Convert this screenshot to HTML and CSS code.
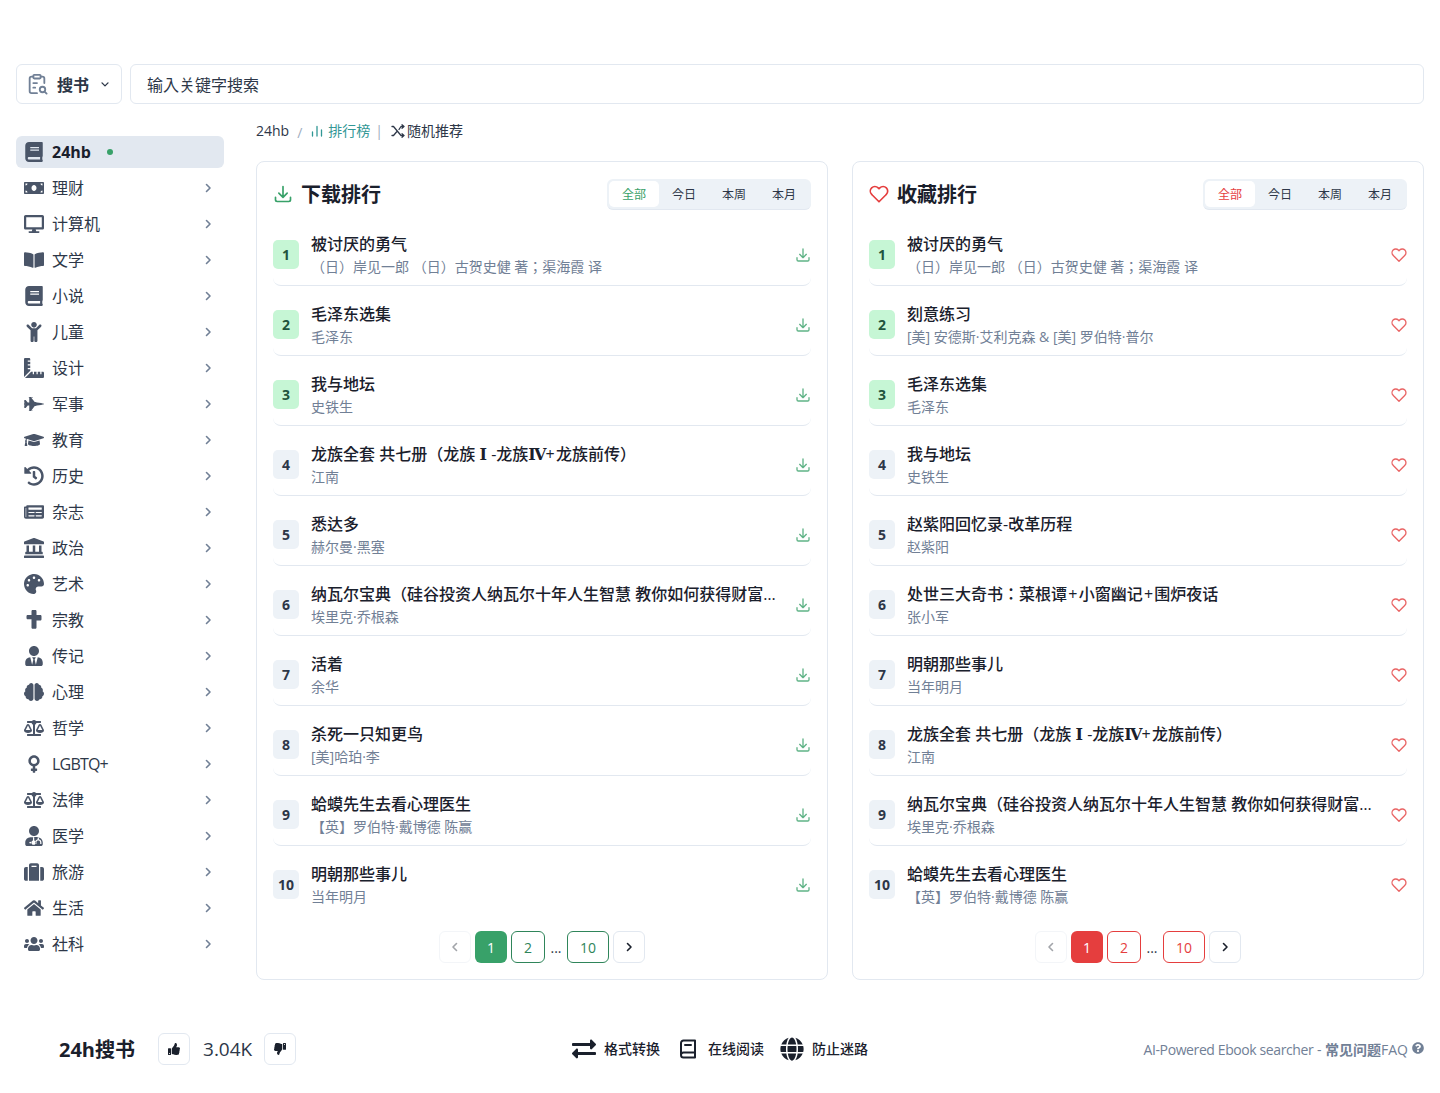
FILE: index.html
```html
<!DOCTYPE html>
<html lang="en">
<head>
    <meta charset="UTF-8">
    <meta name="viewport" content="width=device-width, initial-scale=1.0">
    <title>24h搜书</title>
    <link rel="stylesheet" href="styles.css">
</head>
<body>
    <svg class="icon-defs" xmlns="http://www.w3.org/2000/svg">
        <symbol id="i-book" viewBox="0 0 448 512"><path d="M448 360V24c0-13.3-10.7-24-24-24H96C43 0 0 43 0 96v320c0 53 43 96 96 96h328c13.3 0 24-10.7 24-24v-16c0-7.5-3.5-14.3-8.9-18.7-4.2-15.4-4.2-59.3 0-74.7 5.4-4.3 8.9-11.1 8.9-18.6zM128 134c0-3.3 2.7-6 6-6h212c3.3 0 6 2.7 6 6v20c0 3.3-2.7 6-6 6H134c-3.3 0-6-2.7-6-6v-20zm0 64c0-3.3 2.7-6 6-6h212c3.3 0 6 2.7 6 6v20c0 3.3-2.7 6-6 6H134c-3.3 0-6-2.7-6-6v-20zm253.4 250H96c-17.7 0-32-14.3-32-32 0-17.6 14.4-32 32-32h285.4c-1.9 17.1-1.9 46.9 0 64z"/></symbol>
        <symbol id="i-money" viewBox="0 0 640 512"><path d="M608 64H32C14.33 64 0 78.33 0 96v320c0 17.67 14.33 32 32 32h576c17.67 0 32-14.33 32-32V96c0-17.67-14.33-32-32-32zM48 400v-64c35.35 0 64 28.65 64 64H48zm0-224v-64h64c0 35.35-28.65 64-64 64zm272 176c-44.19 0-80-42.99-80-96 0-53.02 35.82-96 80-96s80 42.98 80 96c0 53.03-35.83 96-80 96zm272 48h-64c0-35.35 28.65-64 64-64v64zm0-224c-35.35 0-64-28.65-64-64h64v64z"/></symbol>
        <symbol id="i-desktop" viewBox="0 0 576 512"><path d="M528 0H48C21.5 0 0 21.5 0 48v320c0 26.5 21.5 48 48 48h192l-16 48h-72c-13.3 0-24 10.7-24 24s10.7 24 24 24h272c13.3 0 24-10.7 24-24s-10.7-24-24-24h-72l-16-48h192c26.5 0 48-21.5 48-48V48c0-26.5-21.5-48-48-48zm-16 352H64V64h448v288z"/></symbol>
        <symbol id="i-book-open" viewBox="0 0 576 512"><path d="M542.22 32.05c-54.8 3.11-163.72 14.43-230.96 55.59-4.64 2.84-7.27 7.89-7.27 13.17v363.87c0 11.55 12.63 18.85 23.28 13.49 69.18-34.82 169.23-44.32 218.7-46.92 16.89-.89 30.02-14.43 30.02-30.66V62.75c.01-17.71-15.35-31.74-33.77-30.7zM264.73 87.64C197.5 46.48 88.58 35.17 33.78 32.05 15.36 31.01 0 45.04 0 62.75V400.6c0 16.24 13.13 29.78 30.02 30.66 49.49 2.6 149.59 12.11 218.77 46.95 10.62 5.35 23.21-1.94 23.21-13.46V100.63c0-5.29-2.62-10.14-7.27-12.99z"/></symbol>
        <symbol id="i-child" viewBox="0 0 384 512"><path d="M120 72c0-39.765 32.235-72 72-72s72 32.235 72 72c0 39.764-32.235 72-72 72s-72-32.236-72-72zm254.627 1.373c-12.496-12.497-32.758-12.497-45.254 0L242.745 160H141.254L54.627 73.373c-12.496-12.497-32.758-12.497-45.254 0-12.497 12.497-12.497 32.758 0 45.255L104 213.254V480c0 17.673 14.327 32 32 32h16c17.673 0 32-14.327 32-32V368h16v112c0 17.673 14.327 32 32 32h16c17.673 0 32-14.327 32-32V213.254l94.627-94.627c12.497-12.497 12.497-32.757 0-45.254z"/></symbol>
        <symbol id="i-ruler" viewBox="0 0 512 512"><path d="M160 288h-56c-4.42 0-8-3.58-8-8v-16c0-4.42 3.58-8 8-8h56v-64h-56c-4.42 0-8-3.58-8-8v-16c0-4.42 3.58-8 8-8h56V96h-56c-4.42 0-8-3.58-8-8V72c0-4.42 3.58-8 8-8h56V32c0-17.67-14.33-32-32-32H32C14.33 0 0 14.33 0 32v448c0 2.77.91 5.24 1.57 7.8L160 329.38V288zm320 64h-32v56c0 4.42-3.58 8-8 8h-16c-4.42 0-8-3.58-8-8v-56h-64v56c0 4.42-3.58 8-8 8h-16c-4.42 0-8-3.58-8-8v-56h-64v56c0 4.42-3.58 8-8 8h-16c-4.42 0-8-3.58-8-8v-56h-41.37L24.2 510.43c2.56.66 5.04 1.57 7.8 1.57h448c17.67 0 32-14.33 32-32v-96c0-17.67-14.33-32-32-32z"/></symbol>
        <symbol id="i-jet" viewBox="0 0 640 512"><path d="M544 224l-128-16-48-16h-24L227.158 44h39.509C278.333 44 288 41.375 288 38s-9.667-6-21.333-6H152v12h16v164h-48l-66.667-80H18.667L8 138.667V208h8v16h48v2.666l-64 8v42.667l64 8V288H16v16H8v69.333L18.667 384h34.667L120 304h48v164h-16v12h114.667c11.667 0 21.333-2.625 21.333-6s-9.667-6-21.333-6h-39.509L344 320h24l48-16 128-16c96-21.333 96-26.583 96-32 0-5.417 0-10.667-96-32z"/></symbol>
        <symbol id="i-cap" viewBox="0 0 640 512"><path d="M622.34 153.2L343.4 67.5c-15.2-4.67-31.6-4.67-46.79 0L17.66 153.2c-23.54 7.23-23.54 38.36 0 45.59l48.63 14.94c-10.67 13.19-17.23 29.28-17.88 46.9C38.78 266.15 32 276.11 32 288c0 10.78 5.68 19.85 13.86 25.65L20.33 428.53C18.11 438.52 25.71 448 35.94 448h56.11c10.24 0 17.84-9.48 15.62-19.47L82.14 313.65C90.32 307.85 96 298.78 96 288c0-11.57-6.47-21.25-15.66-26.87.76-15.02 8.44-28.3 20.69-36.72L296.6 284.5c9.06 2.78 26.44 6.25 46.79 0l278.95-85.7c23.55-7.24 23.55-38.36 0-45.6zM352.79 315.09c-28.53 8.76-52.84 3.92-65.59 0l-145.02-44.55L128 384c0 35.35 85.96 64 192 64s192-28.65 192-64l-14.18-113.47-145.03 44.56z"/></symbol>
        <symbol id="i-history" viewBox="0 0 512 512"><path d="M504 255.531c.253 136.64-111.18 248.372-247.82 248.468-59.015.042-113.223-20.53-155.822-54.911-11.077-8.94-11.905-25.541-1.839-35.607l11.267-11.267c8.609-8.609 22.353-9.551 31.891-1.984C173.062 425.135 212.781 440 256 440c101.705 0 184-82.311 184-184 0-101.705-82.311-184-184-184-48.814 0-93.149 18.969-126.068 49.932l50.754 50.754c10.08 10.08 2.941 27.314-11.313 27.314H24c-8.837 0-16-7.163-16-16V38.627c0-14.254 17.234-21.393 27.314-11.314l49.372 49.372C129.209 34.136 189.552 8 256 8c136.81 0 247.747 110.78 248 247.531zm-180.912 78.784l9.823-12.63c8.138-10.463 6.253-25.542-4.21-33.679L288 256.349V152c0-13.255-10.745-24-24-24h-16c-13.255 0-24 10.745-24 24v135.651l65.409 50.874c10.463 8.137 25.541 6.253 33.679-4.21z"/></symbol>
        <symbol id="i-news" viewBox="0 0 576 512"><path d="M552 64H88c-13.255 0-24 10.745-24 24v8H24c-13.255 0-24 10.745-24 24v272c0 30.928 25.072 56 56 56h472c26.51 0 48-21.49 48-48V88c0-13.255-10.745-24-24-24zM56 400a8 8 0 0 1-8-8V144h16v248a8 8 0 0 1-8 8zm236-16H140c-6.627 0-12-5.373-12-12v-8c0-6.627 5.373-12 12-12h152c6.627 0 12 5.373 12 12v8c0 6.627-5.373 12-12 12zm208 0H348c-6.627 0-12-5.373-12-12v-8c0-6.627 5.373-12 12-12h152c6.627 0 12 5.373 12 12v8c0 6.627-5.373 12-12 12zm-208-96H140c-6.627 0-12-5.373-12-12v-8c0-6.627 5.373-12 12-12h152c6.627 0 12 5.373 12 12v8c0 6.627-5.373 12-12 12zm208 0H348c-6.627 0-12-5.373-12-12v-8c0-6.627 5.373-12 12-12h152c6.627 0 12 5.373 12 12v8c0 6.627-5.373 12-12 12zm0-96H140c-6.627 0-12-5.373-12-12v-40c0-6.627 5.373-12 12-12h360c6.627 0 12 5.373 12 12v40c0 6.627-5.373 12-12 12z"/></symbol>
        <symbol id="i-landmark" viewBox="0 0 512 512"><path d="M501.62 92.11L267.24 2.04a31.958 31.958 0 0 0-22.47 0L10.38 92.11A16.001 16.001 0 0 0 0 107.09V144c0 8.84 7.16 16 16 16h480c8.84 0 16-7.16 16-16v-36.91c0-6.67-4.14-12.64-10.38-14.98zM64 192v160H48c-8.84 0-16 7.16-16 16v48h448v-48c0-8.84-7.16-16-16-16h-16V192h-64v160h-96V192h-64v160h-96V192H64zm432 256H16c-8.84 0-16 7.16-16 16v32c0 8.84 7.16 16 16 16h480c8.84 0 16-7.16 16-16v-32c0-8.84-7.16-16-16-16z"/></symbol>
        <symbol id="i-palette" viewBox="0 0 512 512"><path d="M204.3 5C104.9 24.4 24.8 104.3 5.2 203.4c-37 187 131.7 326.4 258.8 306.7 41.2-6.4 61.4-54.6 42.5-91.7-23.1-45.4 9.9-98.4 60.9-98.4h79.7c35.8 0 64.8-29.6 64.9-65.3C511.5 97.1 368.1-26.9 204.3 5zM96 320c-17.7 0-32-14.3-32-32s14.3-32 32-32 32 14.3 32 32-14.3 32-32 32zm32-128c-17.7 0-32-14.3-32-32s14.3-32 32-32 32 14.3 32 32-14.3 32-32 32zm128-64c-17.7 0-32-14.3-32-32s14.3-32 32-32 32 14.3 32 32-14.3 32-32 32zm128 64c-17.7 0-32-14.3-32-32s14.3-32 32-32 32 14.3 32 32-14.3 32-32 32z"/></symbol>
        <symbol id="i-cross" viewBox="0 0 384 512"><path d="M352 128h-96V32c0-17.67-14.33-32-32-32h-64c-17.67 0-32 14.33-32 32v96H32c-17.67 0-32 14.33-32 32v44c0 17.67 14.33 32 32 32h96v212c0 17.67 14.33 32 32 32h64c17.67 0 32-14.33 32-32V268h96c17.67 0 32-14.33 32-32v-76c0-17.67-14.33-32-32-32z"/></symbol>
        <symbol id="i-user-tie" viewBox="0 0 448 512"><path d="M224 256c70.7 0 128-57.3 128-128S294.7 0 224 0 96 57.3 96 128s57.3 128 128 128zm95.8 32.6L272 480l-32-136 32-56h-96l32 56-32 136-47.8-191.4C56.9 292 0 350.3 0 422.4V464c0 26.5 21.5 48 48 48h352c26.5 0 48-21.5 48-48v-41.6c0-72.1-56.9-130.4-128.2-133.8z"/></symbol>
        <symbol id="i-brain" viewBox="0 0 576 512"><path d="M208 0c-29.9 0-54.7 20.5-61.8 48.2-.8 0-1.4-.2-2.2-.2-35.3 0-64 28.7-64 64 0 4.8.6 9.5 1.7 14C52.5 138 32 166.6 32 200c0 12.6 3.2 24.3 8.3 34.9C16.3 248.7 0 274.3 0 304c0 33.3 20.4 61.9 49.4 73.9-.9 4.6-1.4 9.3-1.4 14.1 0 39.8 32.2 72 72 72 4.1 0 8.1-.5 12-1.2 9.6 28.5 36.2 49.2 68 49.2 39.8 0 72-32.2 72-72V64c0-35.3-28.7-64-64-64zm368 304c0-29.7-16.3-55.3-40.3-69.1 5.2-10.6 8.3-22.3 8.3-34.9 0-33.4-20.5-62-49.7-74 1-4.5 1.7-9.2 1.7-14 0-35.3-28.7-64-64-64-.8 0-1.5.2-2.2.2C422.7 20.5 397.9 0 368 0c-35.3 0-64 28.6-64 64v376c0 39.8 32.2 72 72 72 31.8 0 58.4-20.7 68-49.2 3.9.7 7.9 1.2 12 1.2 39.8 0 72-32.2 72-72 0-4.8-.5-9.5-1.4-14.1 29-12 49.4-40.6 49.4-73.9z"/></symbol>
        <symbol id="i-scale" viewBox="0 0 640 512"><path d="M256 336h-.02c0-16.18 1.34-8.73-85.05-181.51-17.65-35.29-68.19-35.36-85.87 0C-2.06 328.75.02 320.33.02 336H0c0 44.18 57.31 80 128 80s128-35.82 128-80zM128 176l72 144H56l72-144zm511.98 160c0-16.18 1.34-8.73-85.05-181.51-17.65-35.29-68.19-35.36-85.87 0-87.12 174.26-85.04 165.84-85.04 181.51H384c0 44.18 57.31 80 128 80s128-35.82 128-80h-.02zM440 320l72-144 72 144H440zm88 128H352V153.25c23.51-10.29 41.16-31.48 46.39-57.25H528c8.84 0 16-7.16 16-16V48c0-8.84-7.16-16-16-16H383.64C369.04 12.68 346.09 0 320 0s-49.04 12.68-63.64 32H112c-8.84 0-16 7.16-16 16v32c0 8.84 7.16 16 16 16h129.61c5.23 25.76 22.87 46.96 46.39 57.25V448H112c-8.84 0-16 7.16-16 16v32c0 8.84 7.16 16 16 16h416c8.84 0 16-7.16 16-16v-32c0-8.84-7.16-16-16-16z"/></symbol>
        <symbol id="i-venus" viewBox="0 0 288 512"><path d="M288 176c0-79.5-64.5-144-144-144S0 96.5 0 176c0 68.5 47.9 125.9 112 140.4V368H76c-6.6 0-12 5.4-12 12v40c0 6.6 5.4 12 12 12h36v36c0 6.6 5.4 12 12 12h40c6.6 0 12-5.4 12-12v-36h36c6.6 0 12-5.4 12-12v-40c0-6.6-5.4-12-12-12h-36v-51.6c64.1-14.5 112-71.9 112-140.4zm-224 0c0-44.1 35.9-80 80-80s80 35.9 80 80-35.9 80-80 80-80-35.9-80-80z"/></symbol>
        <symbol id="i-user-md" viewBox="0 0 448 512"><path d="M224 256c70.7 0 128-57.3 128-128S294.7 0 224 0 96 57.3 96 128s57.3 128 128 128z"/><path fill-rule="evenodd" d="M130 288C58 292 0 350 0 422v42c0 26.500 21.500 48 48 48h352c26.500 0 48-21.500 48-48v-42c0-72-58-130-130-134v52c-36 8-64 40-64 78v40h32v-40c0-62 96-62 96 0v40h32v-40c0-38-28-70-64-78v-50c-14-4-30-6-46-6h-60c-16 0-32 2-46 6v84c-24 7-40 28-40 52 0 31 25 56 56 56s56-25 56-56c0-24-16-45-40-52v-86zm-2 112a24 24 0 1 0 0 48 24 24 0 0 0 0-48z"/></symbol>
        <symbol id="i-suitcase" viewBox="0 0 512 512"><path d="M128 480h256V80c0-26.500-21.500-48-48-48H176c-26.500 0-48 21.500-48 48v400zm64-384h128v32H192V96zm320 80v256c0 26.500-21.500 48-48 48h-48V128h48c26.500 0 48 21.500 48 48zM96 480H48c-26.500 0-48-21.500-48-48V176c0-26.500 21.500-48 48-48h48v352z"/></symbol>
        <symbol id="i-home" viewBox="0 0 576 512"><path d="M280.37 148.26L96 300.11V464a16 16 0 0 0 16 16l112.06-.29a16 16 0 0 0 15.92-16V368a16 16 0 0 1 16-16h64a16 16 0 0 1 16 16v95.640a16 16 0 0 0 16 16.050L464 480a16 16 0 0 0 16-16V300L295.670 148.260a12.190 12.190 0 0 0-15.300 0zM571.600 251.470L488 182.560V44.050a12 12 0 0 0-12-12h-56a12 12 0 0 0-12 12v72.610L318.470 43a48 48 0 0 0-61 0L4.340 251.470a12 12 0 0 0-1.600 16.900l25.500 31A12 12 0 0 0 45.150 301l235.220-193.740a12.190 12.190 0 0 1 15.300 0L530.900 301a12 12 0 0 0 16.900-1.600l25.500-31a12 12 0 0 0-1.700-16.930z"/></symbol>
        <symbol id="i-users" viewBox="0 0 640 512"><path d="M96 224c35.300 0 64-28.700 64-64s-28.700-64-64-64-64 28.700-64 64 28.700 64 64 64zm448 0c35.300 0 64-28.700 64-64s-28.700-64-64-64-64 28.700-64 64 28.700 64 64 64zm32 32h-64c-17.600 0-33.500 7.100-45.100 18.600 40.300 22.100 68.900 62 75.100 109.400h66c17.700 0 32-14.300 32-32v-32c0-35.300-28.700-64-64-64zm-256 0c61.900 0 112-50.100 112-112S381.900 32 320 32 208 82.100 208 144s50.100 112 112 112zm76.800 32h-8.300c-20.800 10-43.900 16-68.500 16s-47.600-6-68.500-16h-8.300C179.600 288 128 339.600 128 403.200V432c0 26.500 21.500 48 48 48h288c26.500 0 48-21.500 48-48v-28.800c0-63.600-51.600-115.200-115.200-115.200zm-223.700-13.400C161.500 263.100 145.600 256 128 256H64c-35.300 0-64 28.700-64 64v32c0 17.700 14.300 32 32 32h65.900c6.300-47.400 34.900-87.300 75.200-109.400z"/></symbol>
        <symbol id="i-thumb" viewBox="0 0 512 512"><path d="M104 224H24c-13.255 0-24 10.745-24 24v240c0 13.255 10.745 24 24 24h80c13.255 0 24-10.745 24-24V248c0-13.255-10.745-24-24-24zM64 472c-13.255 0-24-10.745-24-24s10.745-24 24-24 24 10.745 24 24-10.745 24-24 24zM384 81.452c0 42.416-25.970 66.208-33.277 94.548h101.723c33.397 0 59.397 27.746 59.553 58.098.084 17.938-7.546 37.249-19.439 49.197l-.11.11c9.836 23.337 8.237 56.037-9.308 79.469 8.681 25.895-.069 57.704-16.382 74.757 4.298 17.598 2.244 32.575-6.148 44.632C440.202 511.587 389.616 512 346.839 512l-2.845-.001c-48.287-.017-87.806-17.598-119.560-31.725-15.957-7.099-36.821-15.887-52.651-16.178-6.540-.12-11.783-5.457-11.783-11.998v-213.770c0-3.200 1.282-6.271 3.558-8.521 39.614-39.144 56.648-80.587 89.117-113.111 14.804-14.832 20.188-37.236 25.393-58.902C282.515 39.293 291.817 0 312 0c24 0 72 8 72 81.452z"/></symbol>
        <symbol id="i-exchange" viewBox="0 0 512 512"><path d="M0 168v-16c0-13.255 10.745-24 24-24h360V80c0-21.367 25.899-32.042 40.971-16.971l80 80c9.372 9.373 9.372 24.569 0 33.941l-80 80C409.956 271.982 384 261.456 384 240v-48H24c-13.255 0-24-10.745-24-24zm488 152H128v-48c0-21.314-25.862-32.080-40.971-16.971l-80 80c-9.372 9.373-9.372 24.569 0 33.941l80 80C102.057 463.997 128 453.437 128 432v-48h360c13.255 0 24-10.745 24-24v-16c0-13.255-10.745-24-24-24z"/></symbol>
        <symbol id="i-globe" viewBox="0 0 496 512"><path d="M336.500 160C322 70.700 287.800 8 248 8s-74 62.700-88.500 152h177zM152 256c0 22.200 1.200 43.500 3.300 64h185.300c2.100-20.500 3.300-41.800 3.300-64s-1.200-43.500-3.300-64H155.300c-2.100 20.500-3.300 41.800-3.300 64zm324.700-96c-28.600-67.900-86.500-120.400-158-141.600 24.400 33.800 41.200 84.700 50 141.600h108zM177.200 18.400C105.800 39.600 47.800 92.100 19.300 160h108c8.700-56.900 25.500-107.800 49.900-141.600zM487.400 192H372.700c2.100 21 3.300 42.500 3.300 64s-1.200 43-3.300 64h114.600c5.500-20.500 8.600-41.800 8.600-64s-3.100-43.500-8.500-64zM120 256c0-21.500 1.200-43 3.300-64H8.600C3.200 212.500 0 233.800 0 256s3.200 43.500 8.600 64h114.600c-2-21-3.200-42.500-3.200-64zm39.500 96c14.500 89.300 48.700 152 88.500 152s74-62.700 88.500-152h-177zm159.300 141.600c71.400-21.200 129.400-73.700 158-141.600h-108c-8.800 56.900-25.600 107.800-50 141.600zM19.300 352c28.600 67.900 86.500 120.400 158 141.600-24.400-33.800-41.200-84.700-50-141.600h-108z"/></symbol>
        <symbol id="i-question" viewBox="0 0 512 512"><path d="M504 256c0 136.997-111.043 248-248 248S8 392.997 8 256C8 119.083 119.043 8 256 8s248 111.083 248 248zM262.655 90c-54.497 0-89.255 22.957-116.549 63.758-3.536 5.286-2.353 12.415 2.715 16.258l34.699 26.310c5.205 3.947 12.621 3.008 16.665-2.122 17.864-22.658 30.113-35.797 57.303-35.797 20.429 0 45.698 13.148 45.698 32.958 0 14.976-12.363 22.667-32.534 33.976C247.128 238.528 216 254.941 216 296v4c0 6.627 5.373 12 12 12h56c6.627 0 12-5.373 12-12v-1.333c0-28.462 83.186-29.647 83.186-106.667 0-58.002-60.165-102-116.531-102zM256 338c-25.365 0-46 20.635-46 46 0 25.364 20.635 46 46 46s46-20.636 46-46c0-25.365-20.635-46-46-46z"/></symbol>
        <symbol id="i-download" viewBox="0 0 24 24"><path fill="none" stroke="currentColor" stroke-width="2" stroke-linecap="round" stroke-linejoin="round" d="M3 16v3a2 2 0 0 0 2 2h14a2 2 0 0 0 2-2v-3M12 3v13M7 11l5 5 5-5"/></symbol>
        <symbol id="i-heart" viewBox="0 0 24 24"><path fill="none" stroke="currentColor" stroke-width="2" stroke-linecap="round" stroke-linejoin="round" d="M20.800 4.600a5.500 5.500 0 0 0-7.800 0L12 5.700l-1-1.100a5.500 5.500 0 0 0-7.800 7.800l1 1.100L12 21.300l7.800-7.800 1-1.100a5.500 5.500 0 0 0 0-7.800z"/></symbol>
        <symbol id="i-chevron" viewBox="0 0 16 16"><path fill="none" stroke="currentColor" stroke-width="1.600" stroke-linecap="round" stroke-linejoin="round" d="M6.500 4.500 10 8l-3.500 3.500"/></symbol>
    </svg>

    <div class="search-row">
        <button class="search-type">
            <svg class="search-type-icon" viewBox="0 0 24 24" fill="none" stroke="currentColor" stroke-width="2" stroke-linecap="round" stroke-linejoin="round"><path d="M16 4h2a2 2 0 0 1 2 2v5M8 4H6a2 2 0 0 0-2 2v14a2 2 0 0 0 2 2h6"/><rect x="8" y="2" width="8" height="4" rx="1"/><path d="M8 11h4M8 16h2"/><circle cx="18" cy="18" r="3"/><path d="m20.500 20.500 2 2"/></svg>
            <span>搜书</span>
            <svg class="search-type-caret" viewBox="0 0 16 16" fill="none" stroke="currentColor" stroke-width="1.800" stroke-linecap="round" stroke-linejoin="round"><path d="M4 6.500 8 10.500 12 6.500"/></svg>
        </button>
        <div class="search-input">输入关键字搜索</div>
    </div>

    <div class="layout">
        <nav class="sidebar">
            <a class="nav-item active"><svg class="nav-icon"><use href="#i-book"/></svg><span class="nav-label">24hb</span><i class="nav-dot"></i></a>
            <a class="nav-item"><svg class="nav-icon"><use href="#i-money"/></svg><span class="nav-label">理财</span><svg class="nav-chevron"><use href="#i-chevron"/></svg></a>
            <a class="nav-item"><svg class="nav-icon"><use href="#i-desktop"/></svg><span class="nav-label">计算机</span><svg class="nav-chevron"><use href="#i-chevron"/></svg></a>
            <a class="nav-item"><svg class="nav-icon"><use href="#i-book-open"/></svg><span class="nav-label">文学</span><svg class="nav-chevron"><use href="#i-chevron"/></svg></a>
            <a class="nav-item"><svg class="nav-icon"><use href="#i-book"/></svg><span class="nav-label">小说</span><svg class="nav-chevron"><use href="#i-chevron"/></svg></a>
            <a class="nav-item"><svg class="nav-icon"><use href="#i-child"/></svg><span class="nav-label">儿童</span><svg class="nav-chevron"><use href="#i-chevron"/></svg></a>
            <a class="nav-item"><svg class="nav-icon"><use href="#i-ruler"/></svg><span class="nav-label">设计</span><svg class="nav-chevron"><use href="#i-chevron"/></svg></a>
            <a class="nav-item"><svg class="nav-icon"><use href="#i-jet"/></svg><span class="nav-label">军事</span><svg class="nav-chevron"><use href="#i-chevron"/></svg></a>
            <a class="nav-item"><svg class="nav-icon"><use href="#i-cap"/></svg><span class="nav-label">教育</span><svg class="nav-chevron"><use href="#i-chevron"/></svg></a>
            <a class="nav-item"><svg class="nav-icon"><use href="#i-history"/></svg><span class="nav-label">历史</span><svg class="nav-chevron"><use href="#i-chevron"/></svg></a>
            <a class="nav-item"><svg class="nav-icon"><use href="#i-news"/></svg><span class="nav-label">杂志</span><svg class="nav-chevron"><use href="#i-chevron"/></svg></a>
            <a class="nav-item"><svg class="nav-icon"><use href="#i-landmark"/></svg><span class="nav-label">政治</span><svg class="nav-chevron"><use href="#i-chevron"/></svg></a>
            <a class="nav-item"><svg class="nav-icon"><use href="#i-palette"/></svg><span class="nav-label">艺术</span><svg class="nav-chevron"><use href="#i-chevron"/></svg></a>
            <a class="nav-item"><svg class="nav-icon"><use href="#i-cross"/></svg><span class="nav-label">宗教</span><svg class="nav-chevron"><use href="#i-chevron"/></svg></a>
            <a class="nav-item"><svg class="nav-icon"><use href="#i-user-tie"/></svg><span class="nav-label">传记</span><svg class="nav-chevron"><use href="#i-chevron"/></svg></a>
            <a class="nav-item"><svg class="nav-icon"><use href="#i-brain"/></svg><span class="nav-label">心理</span><svg class="nav-chevron"><use href="#i-chevron"/></svg></a>
            <a class="nav-item"><svg class="nav-icon"><use href="#i-scale"/></svg><span class="nav-label">哲学</span><svg class="nav-chevron"><use href="#i-chevron"/></svg></a>
            <a class="nav-item"><svg class="nav-icon"><use href="#i-venus"/></svg><span class="nav-label nav-latin">LGBTQ+</span><svg class="nav-chevron"><use href="#i-chevron"/></svg></a>
            <a class="nav-item"><svg class="nav-icon"><use href="#i-scale"/></svg><span class="nav-label">法律</span><svg class="nav-chevron"><use href="#i-chevron"/></svg></a>
            <a class="nav-item"><svg class="nav-icon"><use href="#i-user-md"/></svg><span class="nav-label">医学</span><svg class="nav-chevron"><use href="#i-chevron"/></svg></a>
            <a class="nav-item"><svg class="nav-icon"><use href="#i-suitcase"/></svg><span class="nav-label">旅游</span><svg class="nav-chevron"><use href="#i-chevron"/></svg></a>
            <a class="nav-item"><svg class="nav-icon"><use href="#i-home"/></svg><span class="nav-label">生活</span><svg class="nav-chevron"><use href="#i-chevron"/></svg></a>
            <a class="nav-item"><svg class="nav-icon"><use href="#i-users"/></svg><span class="nav-label">社科</span><svg class="nav-chevron"><use href="#i-chevron"/></svg></a>
        </nav>

        <main class="content">
            <div class="crumbs">
                <span>24hb</span>
                <span class="crumb-slash">/</span>
                <span class="crumb-rank">
                    <svg class="crumb-icon" viewBox="0 0 14 14" fill="none" stroke="currentColor" stroke-width="1.300" stroke-linecap="round"><path d="M2.500 12V8M7 12V2.500M11.500 12V6"/></svg>
                    排行榜
                </span>
                <span class="crumb-bar">|</span>
                <span class="crumb-random">
                    <svg class="crumb-icon" viewBox="0 0 14 14" fill="none" stroke="currentColor" stroke-width="1.300" stroke-linecap="round" stroke-linejoin="round"><path d="M1 2.500h1.500l7.500 9H13M1 11.500h1.500L5.500 8M8 5.500l2-3H13M11 .8l2 1.700-2 1.700M11 9.800l2 1.700-2 1.700"/></svg>
                    随机推荐
                </span>
            </div>

            <div class="boards">
                <section class="board board-green">
                    <header class="board-head">
                        <svg class="board-icon"><use href="#i-download"/></svg>
                        <h2>下载排行</h2>
                        <div class="tabs"><span class="tab on">全部</span><span class="tab">今日</span><span class="tab">本周</span><span class="tab">本月</span></div>
                    </header>
                    <ol class="rank-list">
                        <li class="rank-row"><span class="rank top">1</span><div class="rank-text"><div class="rank-title">被讨厌的勇气</div><div class="rank-sub">（日）岸见一郎 （日）古贺史健 著；渠海霞 译</div></div><svg class="rank-action"><use href="#i-download"/></svg></li>
                        <li class="rank-row"><span class="rank top">2</span><div class="rank-text"><div class="rank-title">毛泽东选集</div><div class="rank-sub">毛泽东</div></div><svg class="rank-action"><use href="#i-download"/></svg></li>
                        <li class="rank-row"><span class="rank top">3</span><div class="rank-text"><div class="rank-title">我与地坛</div><div class="rank-sub">史铁生</div></div><svg class="rank-action"><use href="#i-download"/></svg></li>
                        <li class="rank-row"><span class="rank">4</span><div class="rank-text"><div class="rank-title">龙族全套 共七册（龙族<span class="roman">Ⅰ</span>-龙族<span class="roman">Ⅳ</span><span class="plus">+</span>龙族前传）</div><div class="rank-sub">江南</div></div><svg class="rank-action"><use href="#i-download"/></svg></li>
                        <li class="rank-row"><span class="rank">5</span><div class="rank-text"><div class="rank-title">悉达多</div><div class="rank-sub">赫尔曼·黑塞</div></div><svg class="rank-action"><use href="#i-download"/></svg></li>
                        <li class="rank-row"><span class="rank">6</span><div class="rank-text"><div class="rank-title">纳瓦尔宝典（硅谷投资人纳瓦尔十年人生智慧 教你如何获得财富与幸福）</div><div class="rank-sub">埃里克·乔根森</div></div><svg class="rank-action"><use href="#i-download"/></svg></li>
                        <li class="rank-row"><span class="rank">7</span><div class="rank-text"><div class="rank-title">活着</div><div class="rank-sub">余华</div></div><svg class="rank-action"><use href="#i-download"/></svg></li>
                        <li class="rank-row"><span class="rank">8</span><div class="rank-text"><div class="rank-title">杀死一只知更鸟</div><div class="rank-sub">[美]哈珀·李</div></div><svg class="rank-action"><use href="#i-download"/></svg></li>
                        <li class="rank-row"><span class="rank">9</span><div class="rank-text"><div class="rank-title">蛤蟆先生去看心理医生</div><div class="rank-sub">【英】罗伯特·戴博德 陈赢</div></div><svg class="rank-action"><use href="#i-download"/></svg></li>
                        <li class="rank-row last"><span class="rank">10</span><div class="rank-text"><div class="rank-title">明朝那些事儿</div><div class="rank-sub">当年明月</div></div><svg class="rank-action"><use href="#i-download"/></svg></li>
                    </ol>
                    <div class="pager">
                        <button class="page-nav off"><svg><use href="#i-chevron"/></svg></button>
                        <button class="page cur">1</button>
                        <button class="page">2</button>
                        <span class="page-gap">...</span>
                        <button class="page">10</button>
                        <button class="page-nav"><svg><use href="#i-chevron"/></svg></button>
                    </div>
                </section>

                <section class="board board-red">
                    <header class="board-head">
                        <svg class="board-icon"><use href="#i-heart"/></svg>
                        <h2>收藏排行</h2>
                        <div class="tabs"><span class="tab on">全部</span><span class="tab">今日</span><span class="tab">本周</span><span class="tab">本月</span></div>
                    </header>
                    <ol class="rank-list">
                        <li class="rank-row"><span class="rank top">1</span><div class="rank-text"><div class="rank-title">被讨厌的勇气</div><div class="rank-sub">（日）岸见一郎 （日）古贺史健 著；渠海霞 译</div></div><svg class="rank-action"><use href="#i-heart"/></svg></li>
                        <li class="rank-row"><span class="rank top">2</span><div class="rank-text"><div class="rank-title">刻意练习</div><div class="rank-sub">[美] 安德斯·艾利克森 &amp; [美] 罗伯特·普尔</div></div><svg class="rank-action"><use href="#i-heart"/></svg></li>
                        <li class="rank-row"><span class="rank top">3</span><div class="rank-text"><div class="rank-title">毛泽东选集</div><div class="rank-sub">毛泽东</div></div><svg class="rank-action"><use href="#i-heart"/></svg></li>
                        <li class="rank-row"><span class="rank">4</span><div class="rank-text"><div class="rank-title">我与地坛</div><div class="rank-sub">史铁生</div></div><svg class="rank-action"><use href="#i-heart"/></svg></li>
                        <li class="rank-row"><span class="rank">5</span><div class="rank-text"><div class="rank-title">赵紫阳回忆录-改革历程</div><div class="rank-sub">赵紫阳</div></div><svg class="rank-action"><use href="#i-heart"/></svg></li>
                        <li class="rank-row"><span class="rank">6</span><div class="rank-text"><div class="rank-title">处世三大奇书：菜根谭<span class="plus">+</span>小窗幽记<span class="plus">+</span>围炉夜话</div><div class="rank-sub">张小军</div></div><svg class="rank-action"><use href="#i-heart"/></svg></li>
                        <li class="rank-row"><span class="rank">7</span><div class="rank-text"><div class="rank-title">明朝那些事儿</div><div class="rank-sub">当年明月</div></div><svg class="rank-action"><use href="#i-heart"/></svg></li>
                        <li class="rank-row"><span class="rank">8</span><div class="rank-text"><div class="rank-title">龙族全套 共七册（龙族<span class="roman">Ⅰ</span>-龙族<span class="roman">Ⅳ</span><span class="plus">+</span>龙族前传）</div><div class="rank-sub">江南</div></div><svg class="rank-action"><use href="#i-heart"/></svg></li>
                        <li class="rank-row"><span class="rank">9</span><div class="rank-text"><div class="rank-title">纳瓦尔宝典（硅谷投资人纳瓦尔十年人生智慧 教你如何获得财富与幸福）</div><div class="rank-sub">埃里克·乔根森</div></div><svg class="rank-action"><use href="#i-heart"/></svg></li>
                        <li class="rank-row last"><span class="rank">10</span><div class="rank-text"><div class="rank-title">蛤蟆先生去看心理医生</div><div class="rank-sub">【英】罗伯特·戴博德 陈赢</div></div><svg class="rank-action"><use href="#i-heart"/></svg></li>
                    </ol>
                    <div class="pager">
                        <button class="page-nav off"><svg><use href="#i-chevron"/></svg></button>
                        <button class="page cur">1</button>
                        <button class="page">2</button>
                        <span class="page-gap">...</span>
                        <button class="page">10</button>
                        <button class="page-nav"><svg><use href="#i-chevron"/></svg></button>
                    </div>
                </section>
            </div>
        </main>
    </div>

    <footer class="footer">
        <div class="foot-left">
            <strong class="foot-brand">24h搜书</strong>
            <button class="vote"><svg><use href="#i-thumb"/></svg></button>
            <span class="vote-count">3.04K</span>
            <button class="vote down"><svg><use href="#i-thumb"/></svg></button>
        </div>
        <div class="foot-links">
            <a><svg class="foot-icon wide"><use href="#i-exchange"/></svg>格式转换</a>
            <a><svg class="foot-icon" viewBox="0 0 24 24" fill="none" stroke="currentColor" stroke-width="2" stroke-linecap="round" stroke-linejoin="round"><path d="M5 18V6a2.500 2.500 0 0 1 2.500-2.500H19v17H7.500A2.500 2.500 0 0 1 5 18zm0 0a2.500 2.500 0 0 1 2.500-2.500H19M9 8h6"/></svg>在线阅读</a>
            <a><svg class="foot-icon wide"><use href="#i-globe"/></svg>防止迷路</a>
        </div>
        <div class="foot-right">
            <span><span class="foot-tagline">AI-Powered Ebook searcher</span> - <b>常见问题</b>FAQ</span>
            <svg class="foot-help"><use href="#i-question"/></svg>
        </div>
    </footer>
</body>
</html>
```

FILE: styles.css
```css
* {
    margin: 0;
    padding: 0;
    box-sizing: border-box;
}

body {
    font-family: "Open Sans", "Noto Sans CJK JP", sans-serif;
    color: #1a202c;
    background-color: #fff;
    padding: 64px 16px 0;
    font-size: 16px;
}

button {
    font: inherit;
    color: inherit;
    background: none;
    cursor: pointer;
}

svg {
    fill: currentColor;
    display: block;
}

.icon-defs {
    position: absolute;
    width: 0;
    height: 0;
}

/* top search row */
.search-row {
    display: flex;
    gap: 8px;
    height: 40px;
}

.search-type {
    width: 106px;
    border: 1px solid #e2e8f0;
    border-radius: 6px;
    display: flex;
    align-items: center;
    padding-left: 9px;
    font-weight: 700;
    color: #2d3748;
}

.search-type-icon {
    width: 22px;
    height: 22px;
    color: #718096;
    fill: none;
    margin-right: 9px;
}

.search-type-caret {
    width: 12px;
    height: 12px;
    fill: none;
    margin-left: 10px;
}

.search-input {
    flex: 1;
    border: 1px solid #e2e8f0;
    border-radius: 6px;
    padding-left: 16px;
    line-height: 40px;
    color: #2d3748;
}

.layout {
    display: flex;
    gap: 32px;
    margin-top: 16px;
}

/* sidebar */
.sidebar {
    width: 208px;
    flex: none;
    display: flex;
    flex-direction: column;
    gap: 4px;
    padding-top: 16px;
}

.nav-item {
    height: 32px;
    display: flex;
    align-items: center;
    padding: 0 8px;
    border-radius: 6px;
    color: #2d3748;
}

.nav-item.active {
    background-color: #e2e8f0;
    font-weight: 700;
    color: #1a202c;
}

.nav-icon {
    width: 20px;
    height: 20px;
    color: #4a5568;
    margin-right: 8px;
    flex: none;
}

.nav-label {
    flex: 1;
    line-height: 24px;
}

.active .nav-label {
    flex: none;
}

.nav-latin {
    letter-spacing: -0.8px;
}

.nav-dot {
    width: 6px;
    height: 6px;
    border-radius: 50%;
    background-color: #38a169;
    margin-left: 16px;
}

.nav-chevron {
    width: 16px;
    height: 16px;
    color: #718096;
}

/* main column */
.content {
    flex: 1;
    min-width: 0;
}

.crumbs {
    display: flex;
    align-items: center;
    height: 22px;
    line-height: 20px;
    font-size: 14px;
    color: #2d3748;
}

.crumb-slash {
    color: #a0aec0;
    margin: 3px 8px 0 8px;
}

.crumb-rank {
    display: flex;
    align-items: center;
    gap: 4px;
    color: #319795;
}

.crumb-bar {
    color: #a0aec0;
    margin: 0 8px 0 5px;
}

.crumb-random {
    display: flex;
    align-items: center;
    gap: 2px;
}

.crumb-icon {
    width: 14px;
    height: 14px;
    fill: none;
}

.boards {
    display: grid;
    grid-template-columns: minmax(0, 1fr) minmax(0, 1fr);
    gap: 24px;
    margin-top: 19px;
}

.board {
    height: 819px;
    border: 1px solid #e2e8f0;
    border-radius: 8px;
    padding: 16px;
}

.board-green { --accent: #38a169; --accent-dark: #2f855a; }
.board-red { --accent: #e53e3e; --accent-dark: #e53e3e; }

.board-head {
    display: flex;
    align-items: center;
    height: 32px;
}

.board-icon {
    width: 20px;
    height: 20px;
    color: var(--accent);
    margin-right: 8px;
}

.board-head h2 {
    flex: 1;
    font-size: 20px;
    font-weight: 700;
    line-height: 32px;
    padding-top: 2px;
}

.tabs {
    display: flex;
    width: 204px;
    height: 31px;
    padding: 2px;
    background-color: #edf2f7;
    border-radius: 6px;
    border-bottom: 1px solid #e2e8f0;
}

.tab {
    flex: 1;
    font-size: 12px;
    line-height: 27px;
    text-align: center;
    border-radius: 5px;
    color: #2d3748;
}

.tab.on {
    background-color: #fff;
    color: var(--accent);
}

.rank-list {
    list-style: none;
    margin-top: 12px;
}

.rank-row {
    height: 64px;
    padding-top: 2px;
    margin-bottom: 6px;
    display: flex;
    align-items: center;
    border-bottom: 1px solid #e2e8f0;
    border-radius: 8px;
    gap: 12px;
}

.rank-row.last {
    border-bottom-color: transparent;
}

.rank {
    width: 26px;
    height: 29px;
    flex: none;
    border-radius: 5px;
    background-color: #edf2f7;
    font-size: 14px;
    font-weight: 700;
    line-height: 29px;
    text-align: center;
    color: #2d3748;
}

.rank.top {
    background-color: #c6f6d5;
    color: #22543d;
}

.rank-text {
    flex: 1;
    min-width: 0;
}

.rank-title {
    font-weight: 500;
    height: 24px;
    line-height: 24px;
    white-space: nowrap;
    overflow: hidden;
    text-overflow: ellipsis;
}

.roman {
    display: inline-block;
    width: 1em;
    text-align: center;
    font-family: "Liberation Serif", "DejaVu Serif", serif;
    font-weight: 700;
}

.plus {
    margin: 0 1.25px;
}

.rank-sub {
    font-size: 14px;
    line-height: 20px;
    margin-top: 1px;
    color: #718096;
    white-space: nowrap;
    overflow: hidden;
    text-overflow: ellipsis;
}

.rank-action {
    width: 16px;
    height: 16px;
    flex: none;
    color: var(--accent);
    opacity: 0.8;
}

.pager {
    display: flex;
    justify-content: center;
    align-items: center;
    gap: 4px;
    margin-top: 15px;
    font-size: 14px;
}

.page,
.page-nav {
    height: 32px;
    min-width: 32px;
    border-radius: 6px;
}

.page {
    padding: 0 12px;
    border: 1px solid var(--accent-dark);
    color: var(--accent-dark);
}

.page.cur {
    border: 0;
    background-color: var(--accent);
    color: #fff;
}

.page-nav {
    border: 1px solid #e2e8f0;
    display: flex;
    align-items: center;
    justify-content: center;
    color: #1a202c;
}

.page-nav svg {
    width: 16px;
    height: 16px;
}

.page-nav.off {
    opacity: 0.4;
}

.page-nav.off svg {
    transform: rotate(180deg);
}

.page-gap {
    width: 14px;
    text-align: center;
    font-size: 14px;
    color: #2d3748;
}

/* footer */
.footer {
    display: grid;
    grid-template-columns: 1fr auto 1fr;
    align-items: center;
    margin-top: 53px;
    height: 32px;
}

.foot-left {
    display: flex;
    align-items: center;
    padding-left: 43px;
}

.foot-brand {
    font-size: 20px;
    font-weight: 700;
    line-height: 28px;
    margin: 2px 23px 0 0;
}

.vote {
    width: 32px;
    height: 32px;
    border: 1px solid #e2e8f0;
    border-radius: 6px;
    display: flex;
    align-items: center;
    justify-content: center;
}

.vote svg {
    width: 12px;
    height: 12px;
}

.vote.down svg {
    transform: rotate(180deg);
}

.vote-count {
    font-size: 19px;
    line-height: 24px;
    margin: 0 12px 0 13px;
    color: #2d3748;
}

.foot-links {
    display: flex;
    align-items: center;
    gap: 16px;
    font-size: 14px;
    font-weight: 500;
    line-height: 20px;
    color: #1a202c;
}

.foot-links a {
    display: flex;
    align-items: center;
    gap: 8px;
}

.foot-icon {
    width: 24px;
    height: 24px;
    fill: none;
}

.foot-icon.wide {
    fill: currentColor;
}

.foot-right {
    display: flex;
    justify-content: flex-end;
    align-items: flex-start;
    gap: 4px;
    font-size: 14px;
    color: #718096;
}

.foot-tagline {
    letter-spacing: -0.4px;
}

.foot-right b {
    font-weight: 700;
}

.foot-help {
    width: 12px;
    height: 12px;
    margin-top: 3px;
}
```
